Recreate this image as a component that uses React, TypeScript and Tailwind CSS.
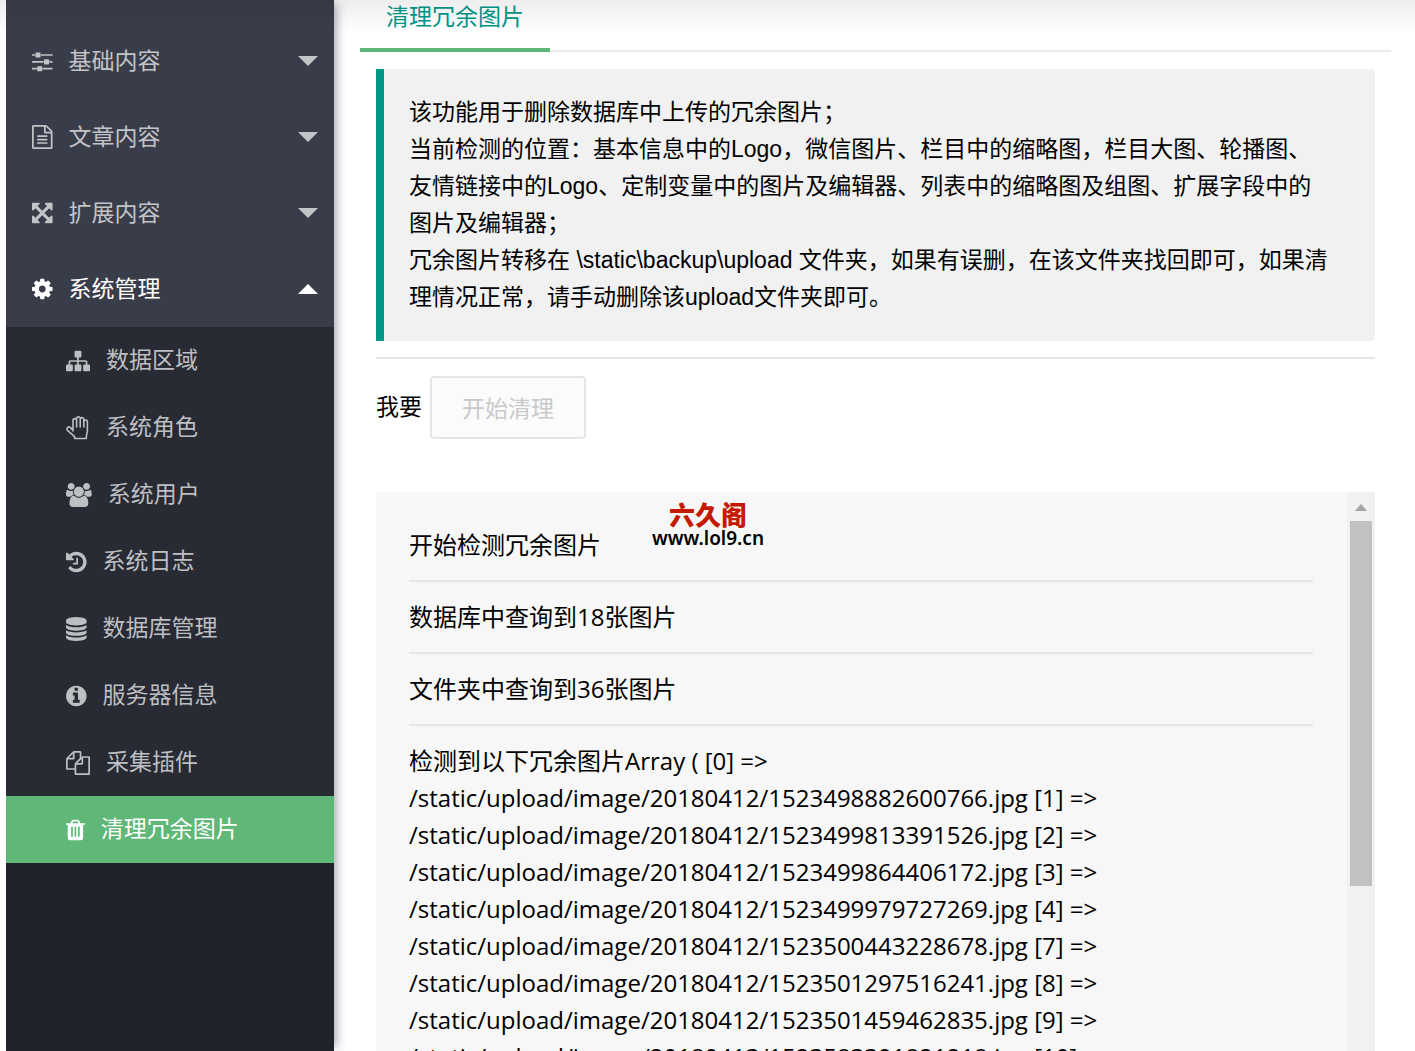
import { useState } from "react";
import type { ReactNode } from "react";

type GlyphProps = { viewBox: string; d: string };

function Glyph({ viewBox, d }: GlyphProps) {
    return (
        <svg viewBox={viewBox} className="h-6 w-auto shrink-0" fill="currentColor" aria-hidden="true">
            <path d={d} />
        </svg>
    );
}

const WIDE = "0 0 1792 1792";
const NORMAL = "128 0 1536 1792";

const icons = {
    sliders: <Glyph viewBox={NORMAL} d="M480 1408v128h-352v-128h352zm352-128q26 0 45 19t19 45v256q0 26-19 45t-45 19h-256q-26 0-45-19t-19-45v-256q0-26 19-45t45-19h256zm160-384v128h-864v-128h864zm-640-512v128h-224v-128h224zm1312 1024v128h-736v-128h736zm-960-1152q26 0 45 19t19 45v256q0 26-19 45t-45 19h-256q-26 0-45-19t-19-45v-256q0-26 19-45t45-19h256zm640 512q26 0 45 19t19 45v256q0 26-19 45t-45 19h-256q-26 0-45-19t-19-45v-256q0-26 19-45t45-19h256zm320 128v128h-224v-128h224zm0-512v128h-864v-128h864z" />,
    file: <Glyph viewBox={NORMAL} d="M1596 380q28 28 48 76t20 88v1152q0 40-28 68t-68 28h-1344q-40 0-68-28t-28-68v-1600q0-40 28-68t68-28h896q40 0 88 20t76 48zm-444-244v376h376q-10-29-22-41l-313-313q-12-12-41-22zm384 1528v-1024h-416q-40 0-68-28t-28-68v-416h-768v1536h1280zm-1024-864q0-14 9-23t23-9h704q14 0 23 9t9 23v64q0 14-9 23t-23 9h-704q-14 0-23-9t-9-23v-64zm736 224q14 0 23 9t9 23v64q0 14-9 23t-23 9h-704q-14 0-23-9t-9-23v-64q0-14 9-23t23-9h704zm0 256q14 0 23 9t9 23v64q0 14-9 23t-23 9h-704q-14 0-23-9t-9-23v-64q0-14 9-23t23-9h704z" />,
    arrows: <Glyph viewBox={NORMAL} d="M1411 541l-355 355 355 355 144-144q29-31 70-14 39 17 39 59v448q0 26-19 45t-45 19h-448q-42 0-59-40-17-39 14-69l144-144-355-355-355 355 144 144q31 30 14 69-17 40-59 40h-448q-26 0-45-19t-19-45v-448q0-42 40-59 39-17 69 14l144 144 355-355-355-355-144 144q-19 19-45 19-12 0-24-5-40-17-40-59v-448q0-26 19-45t45-19h448q42 0 59 40 17 39-14 69l-144 144 355 355 355-355-144-144q-31-30-14-69 17-40 59-40h448q26 0 45 19t19 45v448q0 42-39 59-13 5-25 5-26 0-45-19z" />,
    cog: <Glyph viewBox={NORMAL} d="M1152 896q0-106-75-181t-181-75-181 75-75 181 75 181 181 75 181-75 75-181zm512-109v222q0 12-8 23t-20 13l-185 28q-19 54-39 91 35 50 107 138 10 12 10 25t-9 23q-27 37-99 108t-94 71q-12 0-26-9l-138-108q-44 23-91 38-16 136-29 186-7 28-36 28h-222q-14 0-24.5-8.5t-11.5-21.5l-28-184q-49-16-90-37l-141 107q-10 9-25 9-14 0-25-11-126-114-165-168-7-10-7-23 0-12 8-23 15-21 51-66.5t54-70.5q-27-50-41-99l-183-27q-13-2-21-12.5t-8-23.5v-222q0-12 8-23t19-13l186-28q14-46 39-92-40-57-107-138-10-12-10-24 0-10 9-23 26-36 98.5-107.5t94.5-71.5q13 0 26 10l138 107q44-23 91-38 16-136 29-186 7-28 36-28h222q14 0 24.5 8.5t11.5 21.5l28 184q49 16 90 37l142-107q9-9 24-9 13 0 25 10 129 119 165 170 7 8 7 22 0 12-8 23-15 21-51 66.5t-54 70.5q26 50 41 98l183 28q13 2 21 12.5t8 23.5z" />,
    sitemap: <Glyph viewBox={WIDE} d="M1792 1248v320q0 40-28 68t-68 28h-320q-40 0-68-28t-28-68v-320q0-40 28-68t68-28h96v-192h-512v192h96q40 0 68 28t28 68v320q0 40-28 68t-68 28h-320q-40 0-68-28t-28-68v-320q0-40 28-68t68-28h96v-192h-512v192h96q40 0 68 28t28 68v320q0 40-28 68t-68 28h-320q-40 0-68-28t-28-68v-320q0-40 28-68t68-28h96v-192q0-52 38-90t90-38h512v-192h-96q-40 0-68-28t-28-68v-320q0-40 28-68t68-28h320q40 0 68 28t28 68v320q0 40-28 68t-68 28h-96v192h512q52 0 90 38t38 90v192h96q40 0 68 28t28 68z" />,
    hand: (
        <svg viewBox="0 0 24 24" className="size-6 shrink-0" fill="none" stroke="currentColor" strokeWidth="1.6" strokeLinecap="round" strokeLinejoin="round" aria-hidden="true">
            <path d="M7 15V4.4a1.8 1.8 0 0 1 3.6 0V11M10.6 4.4V2.6a1.8 1.8 0 0 1 3.6 0V11M14.2 3.4a1.8 1.8 0 0 1 3.6 0V11M17.8 5.8a1.8 1.8 0 0 1 3.6 0v8.7c0 2.4-1.1 4.2-1.1 6.4v1.6H8.6v-1.8L1.5 14.4c-1.6-2.2 1-4.6 3-2.8L7 14.4" />
        </svg>
    ),
    users: <Glyph viewBox="64 0 1920 1792" d="M657 896q-162 5-265 128h-134q-82 0-138-40.5t-56-118.5q0-353 124-353 6 0 43.5 21t97.5 42.5 119 21.5q67 0 133-23-5 37-5 66 0 139 81 256zm1071 637q0 120-73 189.5t-194 69.5h-874q-121 0-194-69.5t-73-189.5q0-53 3.5-103.5t14-109 26.5-108.5 43-97.5 62-81 85.5-53.5 111.5-20q10 0 43 21.5t73 48 107 48 135 21.5 135-21.5 107-48 73-48 43-21.5q61 0 111.5 20t85.5 53.5 62 81 43 97.5 26.5 108.5 14 109 3.5 103.5zm-1024-1277q0 106-75 181t-181 75-181-75-75-181 75-181 181-75 181 75 75 181zm704 384q0 159-112.5 271.5t-271.5 112.5-271.5-112.5-112.5-271.5 112.5-271.5 271.5-112.5 271.5 112.5 112.5 271.5zm576 225q0 78-56 118.5t-138 40.5h-134q-103-123-265-128 81-117 81-256 0-29-5-66 66 23 133 23 59 0 119-21.5t97.5-42.5 43.5-21q124 0 124 353zm-128-609q0 106-75 181t-181 75-181-75-75-181 75-181 181-75 181 75 75 181z" />,
    history: <Glyph viewBox={NORMAL} d="M1664 896q0 156-61 298t-164 245-245 164-298 61q-172 0-327-72.5t-264-204.5q-7-10-6.5-22.5t8.5-20.5l137-138q10-9 25-9 16 2 23 12 73 95 179 147t225 52q104 0 198.5-40.5t163.5-109.5 109.5-163.5 40.5-198.5-40.5-198.5-109.5-163.5-163.5-109.5-198.5-40.5q-98 0-188 35.5t-160 101.5l137 138q31 30 14 69-17 40-59 40h-448q-26 0-45-19t-19-45v-448q0-42 40-59 39-17 69 14l130 129q107-101 244.5-156.5t284.5-55.5q156 0 298 61t245 164 164 245 61 298zm-640-288v448q0 14-9 23t-23 9h-320q-14 0-23-9t-9-23v-64q0-14 9-23t23-9h224v-352q0-14 9-23t23-9h64q14 0 23 9t9 23z" />,
    database: <Glyph viewBox={NORMAL} d="M896 768q237 0 443-43t325-127v170q0 69-103 128t-280 93.5-385 34.5-385-34.5-280-93.5-103-128v-170q119 84 325 127t443 43zm0 768q237 0 443-43t325-127v170q0 69-103 128t-280 93.5-385 34.5-385-34.5-280-93.5-103-128v-170q119 84 325 127t443 43zm0-384q237 0 443-43t325-127v170q0 69-103 128t-280 93.5-385 34.5-385-34.5-280-93.5-103-128v-170q119 84 325 127t443 43zm0-1152q208 0 385 34.5t280 93.5 103 128v128q0 69-103 128t-280 93.5-385 34.5-385-34.5-280-93.5-103-128v-128q0-69 103-128t280-93.5 385-34.5z" />,
    info: <Glyph viewBox={NORMAL} d="M1152 1376v-160q0-14-9-23t-23-9h-96v-512q0-14-9-23t-23-9h-320q-14 0-23 9t-9 23v160q0 14 9 23t23 9h96v320h-96q-14 0-23 9t-9 23v160q0 14 9 23t23 9h448q14 0 23-9t9-23zm-128-896v-160q0-14-9-23t-23-9h-192q-14 0-23 9t-9 23v160q0 14 9 23t23 9h192q14 0 23-9t9-23zm640 416q0 209-103 385.5t-279.5 279.5-385.5 103-385.5-103-279.5-279.5-103-385.5 103-385.5 279.5-279.5 385.5-103 385.5 103 279.5 279.5 103 385.5z" />,
    copy: <Glyph viewBox={WIDE} d="M1696 384q40 0 68 28t28 68v1216q0 40-28 68t-68 28h-960q-40 0-68-28t-28-68v-288h-544q-40 0-68-28t-28-68v-672q0-40 20-88t48-76l408-408q28-28 76-48t88-20h416q40 0 68 28t28 68v328q68-40 128-40h416zm-544 213l-299 299h299v-299zm-640-384l-299 299h299v-299zm196 647l316-316v-416h-384v416q0 40-28 68t-68 28h-416v640h512v-256q0-40 20-88t48-76zm956 804v-1152h-384v416q0 40-28 68t-68 28h-416v640h896z" />,
    trash: <Glyph viewBox="192 0 1408 1792" d="M704 1376v-704q0-14-9-23t-23-9h-64q-14 0-23 9t-9 23v704q0 14 9 23t23 9h64q14 0 23-9t9-23zm256 0v-704q0-14-9-23t-23-9h-64q-14 0-23 9t-9 23v704q0 14 9 23t23 9h64q14 0 23-9t9-23zm256 0v-704q0-14-9-23t-23-9h-64q-14 0-23 9t-9 23v704q0 14 9 23t23 9h64q14 0 23-9t9-23zm-544-992h448l-48-117q-7-9-17-11h-317q-10 2-17 11zm928 32v64q0 14-9 23t-23 9h-96v948q0 83-47 143.5t-113 60.5h-832q-66 0-113-58.5t-47-141.5v-952h-96q-14 0-23-9t-9-23v-64q0-14 9-23t23-9h309l70-167q15-37 54-63t79-26h320q40 0 79 26t54 63l70 167h309q14 0 23 9t9 23z" />,
};

const groups: { label: string; icon: ReactNode }[] = [
    { label: "基础内容", icon: icons.sliders },
    { label: "文章内容", icon: icons.file },
    { label: "扩展内容", icon: icons.arrows },
    { label: "系统管理", icon: icons.cog },
];

const systemItems: { label: string; icon: ReactNode }[] = [
    { label: "数据区域", icon: icons.sitemap },
    { label: "系统角色", icon: icons.hand },
    { label: "系统用户", icon: icons.users },
    { label: "系统日志", icon: icons.history },
    { label: "数据库管理", icon: icons.database },
    { label: "服务器信息", icon: icons.info },
    { label: "采集插件", icon: icons.copy },
    { label: "清理冗余图片", icon: icons.trash },
];

const notice = [
    "该功能用于删除数据库中上传的冗余图片；",
    "当前检测的位置：基本信息中的Logo，微信图片、栏目中的缩略图，栏目大图、轮播图、",
    "友情链接中的Logo、定制变量中的图片及编辑器、列表中的缩略图及组图、扩展字段中的",
    "图片及编辑器；",
    "冗余图片转移在 \\static\\backup\\upload 文件夹，如果有误删，在该文件夹找回即可，如果清",
    "理情况正常，请手动删除该upload文件夹即可。",
];

const steps = ["开始检测冗余图片", "数据库中查询到18张图片", "文件夹中查询到36张图片"];

const found = [
    "检测到以下冗余图片Array ( [0] =>",
    "/static/upload/image/20180412/1523498882600766.jpg [1] =>",
    "/static/upload/image/20180412/1523499813391526.jpg [2] =>",
    "/static/upload/image/20180412/1523499864406172.jpg [3] =>",
    "/static/upload/image/20180412/1523499979727269.jpg [4] =>",
    "/static/upload/image/20180412/1523500443228678.jpg [7] =>",
    "/static/upload/image/20180412/1523501297516241.jpg [8] =>",
    "/static/upload/image/20180412/1523501459462835.jpg [9] =>",
    "/static/upload/image/20180413/1523583391821218.jpg [10] =>",
];

function Sidebar() {
    const [open, setOpen] = useState("系统管理");
    const [active, setActive] = useState("清理冗余图片");

    return (
        <aside className="relative z-10 w-[328px] shrink-0 bg-[#20222a] shadow-[6px_0_10px_-4px_rgba(40,45,75,0.45)]">
            <nav>
                <div className="bg-[#393d49] pt-[23px]">
                    {groups.map((group) => (
                        <button
                            key={group.label}
                            onClick={() => setOpen(group.label)}
                            className={`flex h-[76px] w-full items-center gap-4 pr-4 pl-[26px] ${open === group.label ? "text-white" : "text-[#c3c4c8]"}`}
                        >
                            {group.icon}
                            <span className="grow text-left">{group.label}</span>
                            <svg viewBox="0 0 20 10" className={`h-[10px] w-5 ${open === group.label ? "rotate-180" : ""}`} fill="currentColor" aria-hidden="true">
                                <path d="M0 0h20L10 10z" />
                            </svg>
                        </button>
                    ))}
                </div>
                {open === "系统管理" && (
                    <ul className="bg-[#282b33]">
                        {systemItems.map((item) => (
                            <li key={item.label}>
                                <a
                                    href="#"
                                    onClick={() => setActive(item.label)}
                                    className={`flex h-[67px] items-center gap-4 pl-[60px] ${active === item.label ? "bg-[#5fb878] text-white" : "text-[#bebfc2]"}`}
                                >
                                    {item.icon}
                                    <span>{item.label}</span>
                                </a>
                            </li>
                        ))}
                    </ul>
                )}
            </nav>
        </aside>
    );
}

function LogPanel() {
    return (
        <section className="relative mt-[53px] flex min-h-0 grow bg-[#f7f7f7]">
            <div className="min-w-0 grow overflow-hidden pt-[34px] pr-[34px] pl-[33px] font-['Open_Sans','Noto_Sans_CJK_SC',sans-serif] text-2xl">
                {steps.map((step) => (
                    <p key={step} className="mb-4 border-b-2 border-[#e6e6e6] pb-[17px] leading-[37px]">
                        {step}
                    </p>
                ))}
                <p className="leading-[37px]">
                    {found.map((line) => (
                        <span key={line} className="block whitespace-nowrap">{line}</span>
                    ))}
                </p>
            </div>

            {/* Scrollbar */}
            <div className="flex w-7 shrink-0 flex-col items-center bg-[#f1f1f1]">
                <svg viewBox="0 0 12 7" className="mt-3 mb-[10px] h-[7px] w-3 shrink-0" fill="#a3a3a3" aria-hidden="true">
                    <path d="M0 7h12L6 0z" />
                </svg>
                <div className="h-[365px] w-[22px] shrink-0 bg-[#c1c1c1]" />
            </div>

            {/* Watermark */}
            <div className="absolute top-2 left-[275px] flex w-[114px] flex-col items-center">
                <span className="font-['Noto_Sans_CJK_SC',sans-serif] text-[26px] leading-7 font-black text-[#c41a00]">六久阁</span>
                <span className="font-['Noto_Sans',sans-serif] text-[19px] leading-5 font-semibold">www.lol9.cn</span>
            </div>
        </section>
    );
}

export default function App() {
    return (
        <div className="relative flex h-screen overflow-hidden bg-white pl-[6px] font-['Liberation_Sans','Noto_Sans_CJK_SC',sans-serif] text-[23px] text-black">
            <Sidebar />
            <main className="flex min-w-0 grow flex-col pr-6 pl-[26px]">
                <div className="flex h-[52px] shrink-0 border-b-2 border-[#ebebeb]">
                    <button className="h-[52px] border-b-4 border-[#5fb878] px-[26px] pb-[14px] leading-[34px] text-[#009688]">清理冗余图片</button>
                </div>
                <div className="flex min-h-0 grow flex-col px-4 pt-[17px]">
                    <blockquote className="rounded-r-sm border-l-8 border-[#009688] bg-[#f1f1f1] py-[25px] pl-[25px] leading-[37px]">
                        {notice.map((line) => (
                            <span key={line} className="block whitespace-nowrap">{line}</span>
                        ))}
                    </blockquote>
                    <hr className="mt-4 border-t-2 border-[#e6e6e6]" />
                    <div className="mt-[17px] flex items-center gap-2">
                        <span>我要</span>
                        <button disabled className="h-[63px] rounded-sm border-2 border-[#e6e6e6] bg-[#fbfbfb] px-[30px] pt-1 text-[#c9c9c9]">
                            开始清理
                        </button>
                    </div>
                    <LogPanel />
                </div>
            </main>
            <div className="pointer-events-none absolute inset-x-0 top-0 z-20 h-8 bg-linear-to-b from-black/7 to-transparent" />
        </div>
    );
}
